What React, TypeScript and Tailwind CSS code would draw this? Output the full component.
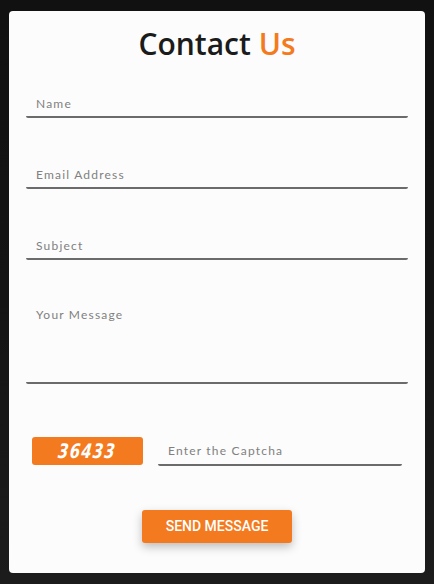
import React from "react";

const fieldClass =
  "w-full bg-transparent border-0 border-b-2 border-[#6b6b6b] rounded-b-[2px] outline-none pl-[10px] text-[12px] tracking-[0.1em] text-[#333] placeholder:text-[#808080]";

export default function App() {
  return (
    <div className="w-[434px] h-[584px] bg-gradient-to-b from-[#111111] via-[#141414] to-[#1c1c1c] pt-[11px] pl-[9px]">
      <div
        className="w-[416px] h-[562px] bg-[#fcfcfc] rounded-[4px] px-[17px] flex flex-col"
        style={{ fontFamily: "'Lato', 'Open Sans', sans-serif" }}
      >
        <h1
          className="text-center text-[30px] leading-[36px] font-semibold text-[#1b1b1b] mt-[15px]"
          style={{ fontFamily: "'Open Sans', 'Noto Sans', sans-serif" }}
        >
          Contact <span className="text-[#f47a20]">Us</span>
        </h1>

        <input className={`${fieldClass} h-[36px] pt-2 mt-[20px]`} placeholder="Name" />
        <input className={`${fieldClass} h-[36px] pt-2 mt-[35px]`} placeholder="Email Address" />
        <input className={`${fieldClass} h-[36px] pt-2 mt-[35px]`} placeholder="Subject" />
        <textarea
          className={`${fieldClass} h-[89px] pt-[10px] mt-[35px] resize-none leading-[20px]`}
          placeholder="Your Message"
        />

        <div className="flex items-end mt-[46px] pl-[6px] pr-[6px] gap-[15px]">
          <div className="w-[111px] h-[28px] mb-[1px] bg-[#f47a20] rounded-[3px] flex items-center justify-center">
            <span
              className="text-white text-[20px] font-bold italic tracking-[0.08em]"
              style={{ fontFamily: "'Liberation Sans Narrow', 'DejaVu Sans Condensed', sans-serif", transform: "scaleX(0.82) skewX(-8deg)" }}
            >
              36433
            </span>
          </div>
          <input className={`${fieldClass} flex-1 h-[36px] pt-[6px]`} placeholder="Enter the Captcha" />
        </div>

        <div className="flex justify-center mt-[44px]">
          <button
            className="w-[150px] h-[33px] bg-[#f47a20] rounded-[3px] text-white text-[14px] font-medium shadow-[0_4px_10px_rgba(0,0,0,0.25)]"
            style={{ fontFamily: "Roboto, 'Liberation Sans', sans-serif" }}
          >
            SEND MESSAGE
          </button>
        </div>
      </div>
    </div>
  );
}
